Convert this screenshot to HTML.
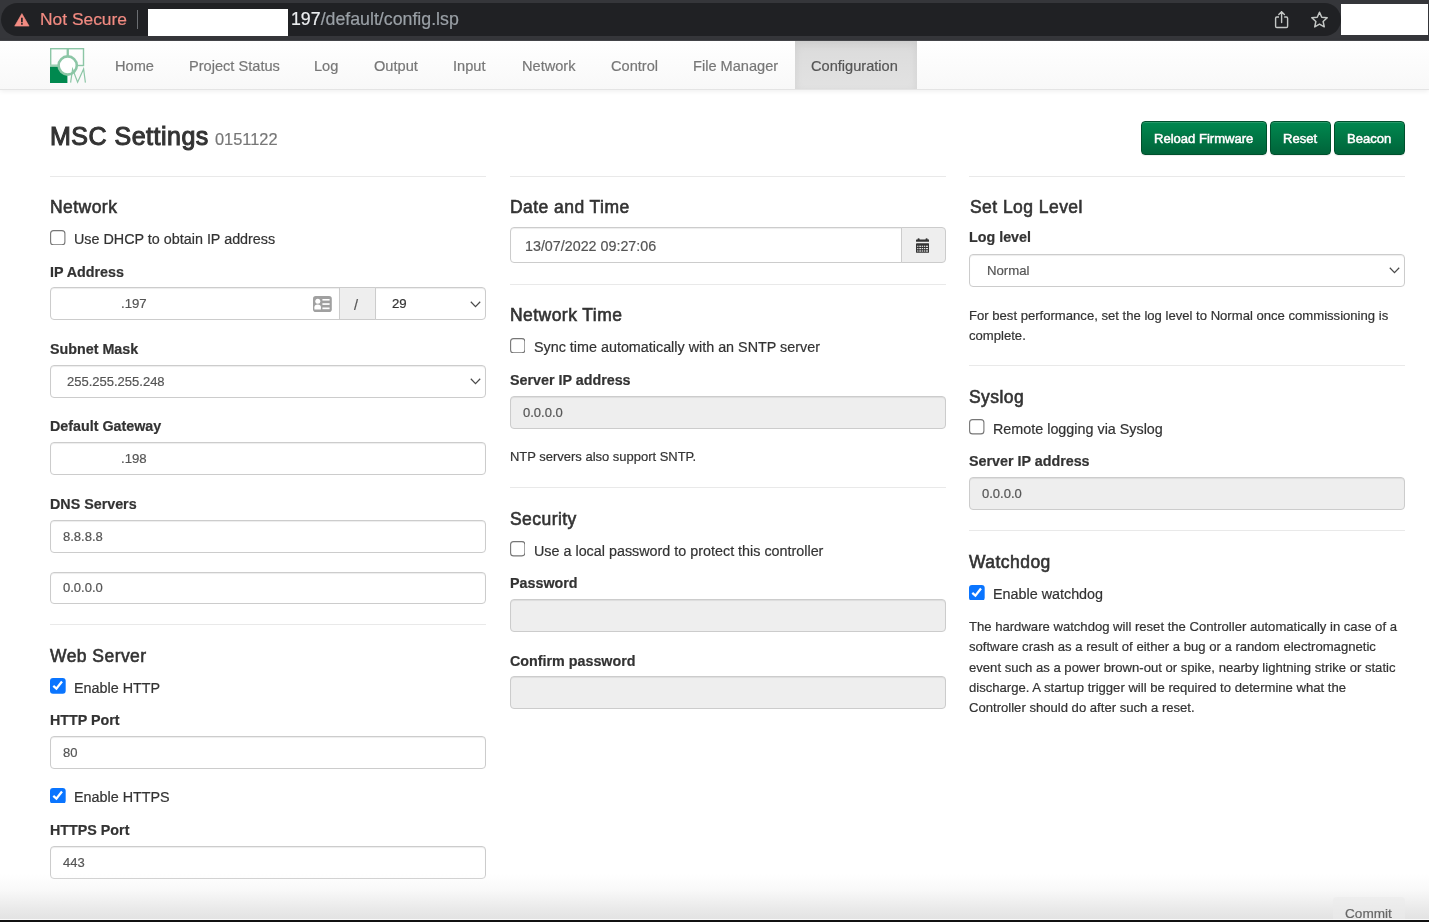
<!DOCTYPE html>
<html><head><meta charset="utf-8"><title>MSC Settings</title>
<style>
html,body{margin:0;padding:0;background:#fff;width:1429px;height:922px;overflow:hidden;position:relative}
.t{position:absolute;white-space:nowrap;font-family:"Liberation Sans", sans-serif;will-change:transform;-webkit-text-stroke:0.2px currentColor}
.b{position:absolute}
</style></head><body>
<div class="b" style="left:0px;top:0px;width:1429px;height:41px;background:#35363a"></div>
<div class="b" style="left:0px;top:40.3px;width:1429px;height:0.9000000000000057px;background:#45464a"></div>
<div class="b" style="left:1px;top:3px;width:1340px;height:33px;background:#202124;border-radius:0 16.5px 16.5px 0;border-top-left-radius:16.5px;border-bottom-left-radius:16.5px"></div>
<svg class="b" style="left:14px;top:12.5px" width="16" height="14" viewBox="0 0 16 14"><path d="M7.9 0.6 L15.1 13.1 L0.7 13.1 Z" fill="#f28b82" stroke="#f28b82" stroke-width="0.6" stroke-linejoin="round"/><rect x="7.05" y="4.7" width="1.7" height="4.6" fill="#202124"/><rect x="7.05" y="10.1" width="1.7" height="1.6" fill="#202124"/></svg>
<div class="t" style="left:40.3px;top:10.600000000000001px;font-size:17.4px;line-height:17.4px;font-weight:400;color:#f28b82;">Not Secure</div>
<div class="b" style="left:137px;top:10px;width:1.1999999999999886px;height:19px;background:#6b6e72"></div>
<div class="b" style="left:148px;top:9px;width:140px;height:27px;background:#fff"></div>
<div class="t" style="left:291.3px;top:10.899999999999999px;font-size:17.75px;line-height:17.75px;font-weight:400;color:#9aa0a6;"><span style="color:#eceef0">197</span>/default/config.lsp</div>
<svg class="b" style="left:1274px;top:10px" width="16" height="19" viewBox="0 0 16 19"><path d="M5.0 7.0 H2.8 Q1.6 7.0 1.6 8.2 V16.3 Q1.6 17.5 2.8 17.5 H12.4 Q13.6 17.5 13.6 16.3 V8.2 Q13.6 7.0 12.4 7.0 H10.2" fill="none" stroke="#c4c7c5" stroke-width="1.4"/><path d="M7.6 12.6 V1.8 M4.8 4.6 L7.6 1.7 L10.4 4.6" fill="none" stroke="#c4c7c5" stroke-width="1.4" stroke-linecap="round" stroke-linejoin="round"/></svg>
<svg class="b" style="left:1310px;top:9.5px" width="19" height="19" viewBox="0 0 19 19"><path d="M9.50 2.20 L11.75 7.20 L17.20 7.80 L13.14 11.48 L14.26 16.85 L9.50 14.13 L4.74 16.85 L5.86 11.48 L1.80 7.80 L7.25 7.20 Z" fill="none" stroke="#c4c7c5" stroke-width="1.5" stroke-linejoin="round"/></svg>
<div class="b" style="left:1341px;top:4px;width:87px;height:31px;background:#fff"></div>
<div class="b" style="left:0px;top:41px;width:1429px;height:48px;background:linear-gradient(#fff,#f8f8f8);border-bottom:1px solid #e4e4e4;box-shadow:0 1px 5px rgba(0,0,0,.075);height:48px"></div>
<div class="b" style="left:795px;top:41px;width:121.5px;height:48px;background:linear-gradient(#dbdbdb,#e2e2e2);box-shadow:inset 0 3px 9px rgba(0,0,0,.075)"></div>
<svg class="b" style="left:49.5px;top:47.5px" width="37" height="36" viewBox="0 0 37 36">
<rect x="0.7" y="0.7" width="16.6" height="16.8" fill="none" stroke="#8cc6a6" stroke-width="1.4"/>
<rect x="18.2" y="0.7" width="15.3" height="16.8" fill="none" stroke="#8cc6a6" stroke-width="1.4"/>
<rect x="0" y="16.6" width="17.5" height="2.2" fill="#9fd0b4"/>
<rect x="0" y="18.8" width="17.4" height="16.2" fill="#00894f"/>
<circle cx="17.7" cy="17.5" r="9.1" fill="#fff" stroke="#8cc6a6" stroke-width="2.6"/>
<path d="M20.6 34.6 L22.6 21.0 L27.6 34.2 L33.6 21.0 L35.4 34.6" fill="none" stroke="#8cc6a6" stroke-width="1.2" stroke-linejoin="miter"/>
</svg>
<div class="t" style="left:114.9px;top:59px;font-size:14.6px;line-height:14.6px;font-weight:400;color:#777;">Home</div>
<div class="t" style="left:188.8px;top:59px;font-size:14.6px;line-height:14.6px;font-weight:400;color:#777;">Project Status</div>
<div class="t" style="left:314.1px;top:59px;font-size:14.6px;line-height:14.6px;font-weight:400;color:#777;">Log</div>
<div class="t" style="left:374.2px;top:59px;font-size:14.6px;line-height:14.6px;font-weight:400;color:#777;">Output</div>
<div class="t" style="left:453.2px;top:59px;font-size:14.6px;line-height:14.6px;font-weight:400;color:#777;">Input</div>
<div class="t" style="left:521.8px;top:59px;font-size:14.6px;line-height:14.6px;font-weight:400;color:#777;">Network</div>
<div class="t" style="left:611px;top:59px;font-size:14.6px;line-height:14.6px;font-weight:400;color:#777;">Control</div>
<div class="t" style="left:693.2px;top:59px;font-size:14.6px;line-height:14.6px;font-weight:400;color:#777;">File Manager</div>
<div class="t" style="left:811.3px;top:59px;font-size:14.6px;line-height:14.6px;font-weight:400;color:#555;">Configuration</div>
<div class="t" style="left:49.5px;top:123.6px;font-size:25px;line-height:25px;font-weight:400;color:#333;letter-spacing:0.5px;-webkit-text-stroke:1.05px #333">MSC Settings</div>
<div class="t" style="left:214.8px;top:130.6px;font-size:16.4px;line-height:16.4px;font-weight:400;color:#777;">0151122</div>
<div class="b" style="left:1141px;top:121px;width:125.5px;height:34px;background:linear-gradient(#00884f,#00643a);border:1px solid #00502d;border-radius:4px;box-sizing:border-box;box-shadow:inset 0 1px 0 rgba(255,255,255,.15),0 1px 1px rgba(0,0,0,.07)"></div>
<div class="t" style="left:1154.4px;top:132.2px;font-size:13.05px;line-height:13.05px;font-weight:400;color:#fff;text-shadow:0 -1px 0 rgba(0,0,0,.2);-webkit-text-stroke:0.5px #fff">Reload Firmware</div>
<div class="b" style="left:1270px;top:121px;width:60.5px;height:34px;background:linear-gradient(#00884f,#00643a);border:1px solid #00502d;border-radius:4px;box-sizing:border-box;box-shadow:inset 0 1px 0 rgba(255,255,255,.15),0 1px 1px rgba(0,0,0,.07)"></div>
<div class="t" style="left:1282.7px;top:132.2px;font-size:13.05px;line-height:13.05px;font-weight:400;color:#fff;text-shadow:0 -1px 0 rgba(0,0,0,.2);-webkit-text-stroke:0.5px #fff">Reset</div>
<div class="b" style="left:1334px;top:121px;width:71px;height:34px;background:linear-gradient(#00884f,#00643a);border:1px solid #00502d;border-radius:4px;box-sizing:border-box;box-shadow:inset 0 1px 0 rgba(255,255,255,.15),0 1px 1px rgba(0,0,0,.07)"></div>
<div class="t" style="left:1346.7px;top:132.2px;font-size:13.05px;line-height:13.05px;font-weight:400;color:#fff;text-shadow:0 -1px 0 rgba(0,0,0,.2);-webkit-text-stroke:0.5px #fff">Beacon</div>
<div class="b" style="left:50px;top:175.7px;width:436px;height:1.0px;background:#e9e9e9"></div>
<div class="b" style="left:509.5px;top:175.7px;width:436.0px;height:1.0px;background:#e9e9e9"></div>
<div class="b" style="left:969px;top:175.7px;width:435.5px;height:1.0px;background:#e9e9e9"></div>
<div class="t" style="left:50px;top:199.1px;font-size:17.5px;line-height:17.5px;font-weight:400;color:#333;letter-spacing:0.45px;-webkit-text-stroke:0.6px #333">Network</div>
<svg class="b" style="left:50px;top:229.8px" width="15.5" height="15.5" viewBox="0 0 15.5 15.5"><rect x="0.6" y="0.6" width="14.3" height="14.3" rx="3" fill="#fff" stroke="#767676" stroke-width="1.1"/></svg>
<div class="t" style="left:74.3px;top:231.9px;font-size:14.35px;line-height:14.35px;font-weight:400;color:#333;">Use DHCP to obtain IP address</div>
<div class="t" style="left:50px;top:264.8px;font-size:14.3px;line-height:14.3px;font-weight:700;color:#333;">IP Address</div>
<div class="b" style="left:50px;top:287px;width:289.5px;height:33px;border:1px solid #ccc;border-radius:4px;box-sizing:border-box;box-shadow:inset 0 1px 1px rgba(0,0,0,.075);background:#fff;border-radius:4px 0 0 4px"></div>
<div class="b" style="left:338.5px;top:287px;width:37.0px;height:33px;border:1px solid #ccc;box-sizing:border-box;background:#eee"></div>
<div class="b" style="left:374.5px;top:287px;width:111.5px;height:33px;border:1px solid #ccc;border-radius:4px;box-sizing:border-box;box-shadow:inset 0 1px 1px rgba(0,0,0,.075);background:#fff;border-radius:0 4px 4px 0"></div>
<div class="t" style="left:121.3px;top:297.2px;font-size:13.2px;line-height:13.2px;font-weight:400;color:#555;">.197</div>
<svg class="b" style="left:313.3px;top:295.8px" width="19" height="16" viewBox="0 0 19 16">
<rect x="0" y="0" width="18.8" height="16" rx="2.8" fill="#a0a0a0"/>
<circle cx="4.8" cy="5.3" r="2.5" fill="#fff"/>
<path d="M1.4 13.5 V11.2 Q1.4 8.6 4.7 8.6 Q7.9 8.6 7.9 11.2 V13.5 Z" fill="#fff"/>
<rect x="9.4" y="3" width="7.2" height="1.6" fill="#fff"/>
<rect x="9.4" y="7.2" width="7.2" height="1.7" fill="#fff"/>
<rect x="9.4" y="11.5" width="7.2" height="1.7" fill="#fff"/>
</svg>
<div class="t" style="left:354px;top:298.2px;font-size:14.5px;line-height:14.5px;font-weight:400;color:#555;">/</div>
<div class="t" style="left:391.7px;top:297.3px;font-size:13.2px;line-height:13.2px;font-weight:400;color:#333;">29</div>
<svg class="b" style="left:469.7px;top:300.5px" width="11" height="7" viewBox="0 0 11 7"><path d="M0.8 0.8 L5.5 5.6 L10.2 0.8" fill="none" stroke="#4a4a4a" stroke-width="1.25"/></svg>
<div class="t" style="left:50px;top:342.1px;font-size:14.3px;line-height:14.3px;font-weight:700;color:#333;">Subnet Mask</div>
<div class="b" style="left:50px;top:365px;width:436px;height:32.5px;border:1px solid #ccc;border-radius:4px;box-sizing:border-box;box-shadow:inset 0 1px 1px rgba(0,0,0,.075);background:#fff"></div>
<div class="t" style="left:67.2px;top:375.2px;font-size:13px;line-height:13px;font-weight:400;color:#555;">255.255.255.248</div>
<svg class="b" style="left:469.7px;top:378.0px" width="11" height="7" viewBox="0 0 11 7"><path d="M0.8 0.8 L5.5 5.6 L10.2 0.8" fill="none" stroke="#4a4a4a" stroke-width="1.25"/></svg>
<div class="t" style="left:50px;top:419.2px;font-size:14.3px;line-height:14.3px;font-weight:700;color:#333;">Default Gateway</div>
<div class="b" style="left:50px;top:442.3px;width:436px;height:32.5px;border:1px solid #ccc;border-radius:4px;box-sizing:border-box;box-shadow:inset 0 1px 1px rgba(0,0,0,.075);background:#fff"></div>
<div class="t" style="left:120.6px;top:452.4px;font-size:13.2px;line-height:13.2px;font-weight:400;color:#555;">.198</div>
<div class="t" style="left:50px;top:496.8px;font-size:14.3px;line-height:14.3px;font-weight:700;color:#333;">DNS Servers</div>
<div class="b" style="left:50px;top:520.3px;width:436px;height:32.5px;border:1px solid #ccc;border-radius:4px;box-sizing:border-box;box-shadow:inset 0 1px 1px rgba(0,0,0,.075);background:#fff"></div>
<div class="t" style="left:62.9px;top:530.2px;font-size:13px;line-height:13px;font-weight:400;color:#555;">8.8.8.8</div>
<div class="b" style="left:50px;top:571.5px;width:436px;height:32.5px;border:1px solid #ccc;border-radius:4px;box-sizing:border-box;box-shadow:inset 0 1px 1px rgba(0,0,0,.075);background:#fff"></div>
<div class="t" style="left:62.9px;top:581.3px;font-size:13px;line-height:13px;font-weight:400;color:#555;">0.0.0.0</div>
<div class="b" style="left:50px;top:624.3px;width:436px;height:1.0px;background:#e9e9e9"></div>
<div class="t" style="left:50px;top:647.7px;font-size:17.5px;line-height:17.5px;font-weight:400;color:#333;letter-spacing:0.45px;-webkit-text-stroke:0.6px #333">Web Server</div>
<svg class="b" style="left:50px;top:678.0px" width="15.7" height="15.7" viewBox="0 0 15.7 15.7"><rect x="0" y="0" width="15.7" height="15.7" rx="3" fill="#0a75ff"/><path d="M3.3 7.9 L6.4 10.6 L12.0 3.5" fill="none" stroke="#fff" stroke-width="2.3" stroke-linecap="butt" stroke-linejoin="miter"/></svg>
<div class="t" style="left:74.3px;top:680.8px;font-size:14.35px;line-height:14.35px;font-weight:400;color:#333;">Enable HTTP</div>
<div class="t" style="left:50px;top:712.9px;font-size:14.3px;line-height:14.3px;font-weight:700;color:#333;">HTTP Port</div>
<div class="b" style="left:50px;top:736px;width:436px;height:32.5px;border:1px solid #ccc;border-radius:4px;box-sizing:border-box;box-shadow:inset 0 1px 1px rgba(0,0,0,.075);background:#fff"></div>
<div class="t" style="left:62.9px;top:746px;font-size:13px;line-height:13px;font-weight:400;color:#555;">80</div>
<svg class="b" style="left:50px;top:787.8px" width="15.7" height="15.7" viewBox="0 0 15.7 15.7"><rect x="0" y="0" width="15.7" height="15.7" rx="3" fill="#0a75ff"/><path d="M3.3 7.9 L6.4 10.6 L12.0 3.5" fill="none" stroke="#fff" stroke-width="2.3" stroke-linecap="butt" stroke-linejoin="miter"/></svg>
<div class="t" style="left:74.3px;top:790.2px;font-size:14.35px;line-height:14.35px;font-weight:400;color:#333;">Enable HTTPS</div>
<div class="t" style="left:50px;top:823px;font-size:14.3px;line-height:14.3px;font-weight:700;color:#333;">HTTPS Port</div>
<div class="b" style="left:50px;top:846.4px;width:436px;height:32.5px;border:1px solid #ccc;border-radius:4px;box-sizing:border-box;box-shadow:inset 0 1px 1px rgba(0,0,0,.075);background:#fff"></div>
<div class="t" style="left:62.9px;top:855.6px;font-size:13px;line-height:13px;font-weight:400;color:#555;">443</div>
<div class="t" style="left:509.5px;top:198.8px;font-size:17.5px;line-height:17.5px;font-weight:400;color:#333;letter-spacing:0.45px;-webkit-text-stroke:0.6px #333">Date and Time</div>
<div class="b" style="left:509.5px;top:227.3px;width:392.0px;height:36.0px;border:1px solid #ccc;border-radius:4px;box-sizing:border-box;box-shadow:inset 0 1px 1px rgba(0,0,0,.075);background:#fff;border-radius:4px 0 0 4px"></div>
<div class="b" style="left:900.5px;top:227.3px;width:45.0px;height:36.0px;border:1px solid #ccc;box-sizing:border-box;background:#eee;border-radius:0 4px 4px 0"></div>
<div class="t" style="left:525px;top:238.6px;font-size:14.3px;line-height:14.3px;font-weight:400;color:#555;">13/07/2022 09:27:06</div>
<svg class="b" style="left:915.8px;top:238px" width="13.2" height="15" viewBox="0 0 13.2 15">
<rect x="0" y="1.4" width="13.2" height="2.4" rx="0.6" fill="#333"/>
<circle cx="2.6" cy="1.4" r="1.1" fill="#333"/><circle cx="10.6" cy="1.4" r="1.1" fill="#333"/>
<rect x="0" y="5.2" width="13.2" height="9.6" rx="0.9" fill="#333"/>
<g fill="#e6e6e6">
<rect x="1.2" y="7.7" width="1.2" height="1.2"/><rect x="3.3" y="7.7" width="2.0" height="1.2"/><rect x="6.0" y="7.7" width="1.2" height="1.2"/><rect x="8.0" y="7.7" width="1.2" height="1.2"/><rect x="9.9" y="7.7" width="2.1" height="1.2"/>
<rect x="1.2" y="10.0" width="1.2" height="1.2"/><rect x="3.3" y="10.0" width="2.0" height="1.2"/><rect x="6.0" y="10.0" width="1.2" height="1.2"/><rect x="8.0" y="10.0" width="1.2" height="1.2"/><rect x="9.9" y="10.0" width="2.1" height="1.2"/>
<rect x="1.2" y="12.4" width="1.2" height="1.2"/><rect x="3.3" y="12.4" width="2.0" height="1.2"/><rect x="6.0" y="12.4" width="1.2" height="1.2"/><rect x="8.0" y="12.4" width="1.2" height="1.2"/><rect x="9.9" y="12.4" width="2.1" height="1.2"/>
</g></svg>
<div class="b" style="left:509.5px;top:284.0px;width:436.0px;height:1.0px;background:#e9e9e9"></div>
<div class="t" style="left:509.5px;top:307.2px;font-size:17.5px;line-height:17.5px;font-weight:400;color:#333;letter-spacing:0.45px;-webkit-text-stroke:0.6px #333">Network Time</div>
<svg class="b" style="left:509.5px;top:337.9px" width="15.5" height="15.5" viewBox="0 0 15.5 15.5"><rect x="0.6" y="0.6" width="14.3" height="14.3" rx="3" fill="#fff" stroke="#767676" stroke-width="1.1"/></svg>
<div class="t" style="left:533.9px;top:340.1px;font-size:14.35px;line-height:14.35px;font-weight:400;color:#333;">Sync time automatically with an SNTP server</div>
<div class="t" style="left:509.5px;top:372.8px;font-size:14.3px;line-height:14.3px;font-weight:700;color:#333;">Server IP address</div>
<div class="b" style="left:509.5px;top:396px;width:436.0px;height:32.5px;border:1px solid #ccc;border-radius:4px;box-sizing:border-box;box-shadow:inset 0 1px 1px rgba(0,0,0,.075);background:#eee"></div>
<div class="t" style="left:523.2px;top:405.7px;font-size:13px;line-height:13px;font-weight:400;color:#555;">0.0.0.0</div>
<div class="t" style="left:509.7px;top:451.3px;font-size:12.97px;line-height:12.97px;font-weight:400;color:#333;">NTP servers also support SNTP.</div>
<div class="b" style="left:509.5px;top:486.7px;width:436.0px;height:1.0px;background:#e9e9e9"></div>
<div class="t" style="left:509.5px;top:510.6px;font-size:17.5px;line-height:17.5px;font-weight:400;color:#333;letter-spacing:0.45px;-webkit-text-stroke:0.6px #333">Security</div>
<svg class="b" style="left:509.5px;top:541.3px" width="15.5" height="15.5" viewBox="0 0 15.5 15.5"><rect x="0.6" y="0.6" width="14.3" height="14.3" rx="3" fill="#fff" stroke="#767676" stroke-width="1.1"/></svg>
<div class="t" style="left:533.9px;top:543.6px;font-size:14.35px;line-height:14.35px;font-weight:400;color:#333;">Use a local password to protect this controller</div>
<div class="t" style="left:509.5px;top:575.6px;font-size:14.3px;line-height:14.3px;font-weight:700;color:#333;">Password</div>
<div class="b" style="left:509.5px;top:599.2px;width:436.0px;height:33.0px;border:1px solid #ccc;border-radius:4px;box-sizing:border-box;box-shadow:inset 0 1px 1px rgba(0,0,0,.075);background:#eee"></div>
<div class="t" style="left:509.5px;top:653.9px;font-size:14.3px;line-height:14.3px;font-weight:700;color:#333;">Confirm password</div>
<div class="b" style="left:509.5px;top:676.3px;width:436.0px;height:33.0px;border:1px solid #ccc;border-radius:4px;box-sizing:border-box;box-shadow:inset 0 1px 1px rgba(0,0,0,.075);background:#eee"></div>
<div class="t" style="left:969.6px;top:199.3px;font-size:17.5px;line-height:17.5px;font-weight:400;color:#333;letter-spacing:0.45px;-webkit-text-stroke:0.6px #333">Set Log Level</div>
<div class="t" style="left:969px;top:229.9px;font-size:14.3px;line-height:14.3px;font-weight:700;color:#333;">Log level</div>
<div class="b" style="left:969px;top:253.8px;width:435.5px;height:33.0px;border:1px solid #ccc;border-radius:4px;box-sizing:border-box;box-shadow:inset 0 1px 1px rgba(0,0,0,.075);background:#fff"></div>
<div class="t" style="left:986.8px;top:264px;font-size:13.2px;line-height:13.2px;font-weight:400;color:#555;">Normal</div>
<svg class="b" style="left:1389.1px;top:266.7px" width="11" height="7" viewBox="0 0 11 7"><path d="M0.8 0.8 L5.5 5.6 L10.2 0.8" fill="none" stroke="#4a4a4a" stroke-width="1.25"/></svg>
<div class="t" style="left:969.0px;top:309.2px;font-size:13.1px;line-height:13.1px;font-weight:400;color:#333;">For best performance, set the log level to Normal once commissioning is</div>
<div class="t" style="left:969.0px;top:329.4px;font-size:13.1px;line-height:13.1px;font-weight:400;color:#333;">complete.</div>
<div class="b" style="left:969px;top:365.2px;width:435.5px;height:1.0px;background:#e9e9e9"></div>
<div class="t" style="left:969px;top:388.5px;font-size:17.5px;line-height:17.5px;font-weight:400;color:#333;letter-spacing:0.45px;-webkit-text-stroke:0.6px #333">Syslog</div>
<svg class="b" style="left:969px;top:419.3px" width="15.5" height="15.5" viewBox="0 0 15.5 15.5"><rect x="0.6" y="0.6" width="14.3" height="14.3" rx="3" fill="#fff" stroke="#767676" stroke-width="1.1"/></svg>
<div class="t" style="left:992.9px;top:422px;font-size:14.35px;line-height:14.35px;font-weight:400;color:#333;">Remote logging via Syslog</div>
<div class="t" style="left:969px;top:453.8px;font-size:14.3px;line-height:14.3px;font-weight:700;color:#333;">Server IP address</div>
<div class="b" style="left:969px;top:477px;width:435.5px;height:32.60000000000002px;border:1px solid #ccc;border-radius:4px;box-sizing:border-box;box-shadow:inset 0 1px 1px rgba(0,0,0,.075);background:#eee"></div>
<div class="t" style="left:981.8px;top:487.2px;font-size:13px;line-height:13px;font-weight:400;color:#555;">0.0.0.0</div>
<div class="b" style="left:969px;top:530.3px;width:435.5px;height:1.0px;background:#e9e9e9"></div>
<div class="t" style="left:969px;top:554.2px;font-size:17.5px;line-height:17.5px;font-weight:400;color:#333;letter-spacing:0.45px;-webkit-text-stroke:0.6px #333">Watchdog</div>
<svg class="b" style="left:969px;top:584.5px" width="15.7" height="15.7" viewBox="0 0 15.7 15.7"><rect x="0" y="0" width="15.7" height="15.7" rx="3" fill="#0a75ff"/><path d="M3.3 7.9 L6.4 10.6 L12.0 3.5" fill="none" stroke="#fff" stroke-width="2.3" stroke-linecap="butt" stroke-linejoin="miter"/></svg>
<div class="t" style="left:992.9px;top:587.3px;font-size:14.35px;line-height:14.35px;font-weight:400;color:#333;">Enable watchdog</div>
<div class="t" style="left:969.0px;top:620.2px;font-size:13.1px;line-height:13.1px;font-weight:400;color:#333;">The hardware watchdog will reset the Controller automatically in case of a</div>
<div class="t" style="left:969.0px;top:640.45px;font-size:13.1px;line-height:13.1px;font-weight:400;color:#333;">software crash as a result of either a bug or a random electromagnetic</div>
<div class="t" style="left:969.0px;top:660.7px;font-size:13.1px;line-height:13.1px;font-weight:400;color:#333;">event such as a power brown-out or spike, nearby lightning strike or static</div>
<div class="t" style="left:969.0px;top:680.95px;font-size:13.1px;line-height:13.1px;font-weight:400;color:#333;">discharge. A startup trigger will be required to determine what the</div>
<div class="t" style="left:969.0px;top:701.2px;font-size:13.1px;line-height:13.1px;font-weight:400;color:#333;">Controller should do after such a reset.</div>
<div class="b" style="left:0px;top:874px;width:1429px;height:44.799999999999955px;background:linear-gradient(rgba(250,250,250,0) 0%,rgba(244,244,244,.55) 35%,rgba(232,232,232,.9) 75%,#e3e3e3 100%)"></div>
<div class="b" style="left:1332.5px;top:897px;width:72.5px;height:22px;background:rgba(235,235,235,.6);border-radius:4px 4px 0 0"></div>
<div class="t" style="left:1345.2px;top:906.5px;font-size:13.6px;line-height:13.6px;font-weight:400;color:#666;">Commit</div>
<div class="b" style="left:0px;top:918.8px;width:1429px;height:1.0px;background:#fafafa"></div>
<div class="b" style="left:0px;top:919.8px;width:1429px;height:2.2000000000000455px;background:#111"></div>
</body></html>
